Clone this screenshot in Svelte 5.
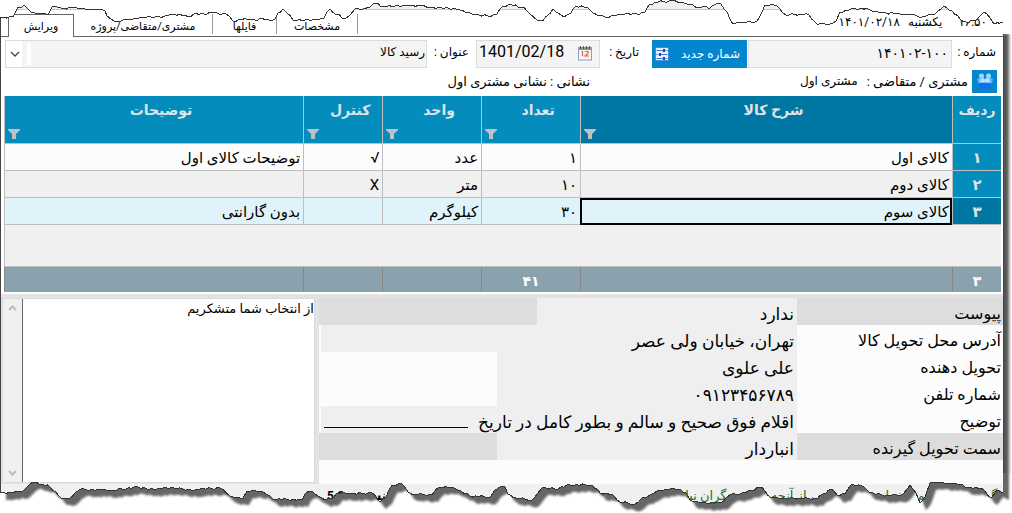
<script>
  const columns = [
    { title: 'ردیف', cls: 'c-row', total: '۳' },
    { title: 'شرح کالا', cls: 'c-name', filter: true, total: '' },
    { title: 'تعداد', cls: 'c-unit', filter: true, total: '۴۱' },
    { title: 'واحد', cls: 'c-unit', filter: true, total: '' },
    { title: 'کنترل', cls: 'c-check', filter: true, total: '' },
    { title: 'توضیحات', cls: 'c-note', filter: true, total: '' }
  ];

  const items = [
    { row: '۱', name: 'کالای اول', count: '۱', unit: 'عدد', check: '√', note: 'توضیحات کالای اول' },
    { row: '۲', name: 'کالای دوم', count: '۱۰', unit: 'متر', check: 'X', note: '' },
    { row: '۳', name: 'کالای سوم', count: '۳۰', unit: 'کیلوگرم', check: '', note: 'بدون گارانتی' }
  ];
  const selected = 2;

  const details = [
    { label: 'پیوست', value: 'ندارد', size: 'small', dark: true },
    { label: 'آدرس محل تحویل کالا', value: 'تهران، خیابان ولی عصر', size: 'full' },
    { label: 'تحویل دهنده', value: 'علی علوی', size: 'medium' },
    { label: 'شماره تلفن', value: '۰۹۱۲۳۴۵۶۷۸۹', size: 'medium' },
    { label: 'توضیح', value: 'اقلام فوق صحیح و سالم و بطور کامل در تاریخ', size: 'full', blank: true },
    { label: 'سمت تحویل گیرنده', value: 'انباردار', size: 'medium', dark: true }
  ];

  const topEdge = [
    0,17, 13,17, 16,11, 18,7, 21,8, 24,5, 28,9, 31,12, 43,14, 48,15, 52,7, 55,6, 61,8, 72,8, 80,8, 90,10, 97,9, 101,9, 105,11,
    107,16, 111,19, 115,22, 121,21, 128,19, 137,19, 147,17, 155,17, 165,16, 171,14, 185,15, 188,17, 195,13, 200,14, 212,13,
    226,14, 233,21, 241,20, 251,19, 257,21, 262,18, 271,21, 275,19, 278,13, 283,9, 287,13, 293,20, 305,20, 320,19, 324,18,
    327,12, 330,9, 335,14, 339,14, 344,19, 350,15, 355,9, 363,9, 370,7, 374,3, 378,3, 380,6, 395,6, 410,5, 421,6, 430,8,
    445,8, 460,10, 467,13, 475,15, 488,16, 497,14, 503,6, 510,4, 518,7, 524,7, 530,14, 537,20, 543,21, 548,15, 553,9, 558,13,
    564,17, 571,13, 576,6, 587,7, 593,13, 598,16, 605,17, 615,16, 625,14, 637,14, 645,12, 650,4, 658,2, 672,1, 681,3, 690,4,
    698,7, 707,7, 709,9, 714,5, 721,4, 727,12, 730,19, 733,24, 739,22, 745,23, 757,21, 762,12, 765,5, 774,5, 780,9, 786,15,
    800,14, 809,15, 814,21, 818,25, 823,23, 830,24, 836,21, 840,12, 846,10, 861,8, 870,10, 880,13, 897,13, 903,15, 912,14,
    922,17, 935,14, 944,6, 952,11, 960,19, 966,22, 974,21, 980,16, 984,12, 990,18, 994,24, 1003,22
  ];

  const bottomEdge = [
    0,493, 10,492, 20,492, 26,488, 30,484, 36,482, 42,484, 50,487, 56,492, 61,498, 70,498, 76,492, 81,489, 90,490, 98,489,
    110,491, 122,489, 138,487, 150,489, 170,488, 195,490, 200,489, 220,488, 230,496, 235,498, 243,498, 247,491, 262,491,
    266,494, 273,499, 302,500, 305,494, 310,491, 318,496, 325,500, 331,499, 337,493, 350,494, 372,493, 380,502, 386,497,
    392,485, 402,484, 408,492, 415,494, 432,495, 439,487, 452,487, 458,490, 470,496, 490,497, 495,490, 500,487, 505,487,
    508,494, 516,498, 532,500, 537,494, 542,488, 555,489, 570,485, 592,485, 600,493, 612,494, 620,502, 628,503, 635,504,
    642,498, 650,495, 657,491, 666,489, 678,489, 686,493, 690,500, 700,503, 720,503, 730,495, 745,493, 760,487, 765,491,
    770,497, 782,499, 800,498, 817,499, 823,494, 831,489, 837,495, 845,494, 852,484, 862,486, 870,493, 890,496, 903,494,
    910,485, 916,493, 920,503, 925,497, 930,483, 940,482, 952,484, 960,484, 968,488, 976,487, 985,491, 991,498, 997,490, 1003,493
  ];

  // splits a line into short steps and shakes them, so it looks like torn paper
  function tear(pts, dy = 0) {
    const out = [];
    let n = 0;
    for (let i = 0; i < pts.length - 2; i += 2) {
      const [x1, y1, x2, y2] = pts.slice(i, i + 4);
      const steps = Math.max(1, Math.round((x2 - x1) / 3));
      for (let s = 0; s < steps; s++) {
        const shake = s === 0 ? 0 : ((n * 7) % 5 - 2) / 2;
        out.push(`${x1 + ((x2 - x1) * s) / steps},${y1 + ((y2 - y1) * s) / steps + shake + dy}`);
        n++;
      }
    }
    out.push(`${pts[pts.length - 2]},${pts[pts.length - 1] + dy}`);
    return out.join(' L');
  }

  const topLine = tear(topEdge);
  const bottomLine = tear(bottomEdge, -473);

  let docNumber = '۱۴۰۱۰۲-۱۰۰';
  let docDate = '1401/02/18';
  let message = 'از انتخاب شما متشکریم';
</script>

<div class="page" dir="rtl">
  <div class="window">
    <div class="titlebar"></div>

    <header class="topbar">
      <div class="clock">
        <span class="time">۱۶:۵۰</span>
        <span>یکشنبه</span>
        <span>۱۴۰۱/۰۲/۱۸</span>
      </div>
      <nav class="tabs" dir="ltr">
        <button class="tab active">ویرایش</button>
        <button class="tab wide">مشتری/متقاضی/پروژه</button>
        <button class="tab narrow">فایلها</button>
        <button class="tab">مشخصات</button>
      </nav>
    </header>

    <div class="fields">
      <label class="number-label" for="number">شماره :</label>
      <input id="number" class="box number" bind:value={docNumber} />
      <button class="new-number">
        <span>شماره جدید</span>
        <svg width="14" height="14" viewBox="0 0 14 14">
          <rect width="14" height="14" fill="#3f8fe0" />
          <rect x="1" y="1" width="12" height="12" fill="#e6eefc" />
          <path d="M1 3.5h12M1 7.5h12M1 11.5h12" stroke="#7aa0dc" />
          <path d="M2 3.5h6M5 7.5h7M2 11.5h6" stroke="#4a7fd0" />
          <path d="M8 2h2v3h-2zM4 6h2v3h-2zM8 10h2v3h-2z" fill="#1749ab" />
        </svg>
      </button>
      <label class="date-label" for="date">تاریخ :</label>
      <div class="box date">
        <svg width="14" height="15" viewBox="0 0 14 15">
          <rect x="0.5" y="1.5" width="13" height="12.5" fill="#f4f4fa" stroke="#8f9cc4" />
          <path d="M1 1h12v3h-12z" fill="#9a8f8a" />
          <path d="M2.5 0v3M5.5 0v3M8.5 0v3M11.5 0v3" stroke="#555" />
          <path d="M3.500 5.500h1v4.500M7 5.500h3v2l-3 2.500h4" fill="none" stroke="#e8672c" stroke-width="1.2" />
        </svg>
        <input id="date" dir="ltr" bind:value={docDate} />
      </div>
      <label class="title-label" for="title">عنوان :</label>
      <div class="box title">
        <select id="title"><option>رسید کالا</option></select>
        <span class="grip"></span>
        <svg class="arrow" width="16" height="26" viewBox="0 0 16 26">
          <path d="M5 11l4 4 4-4" fill="none" stroke="#444" stroke-width="1.3" />
        </svg>
      </div>
    </div>

    <div class="customer">
      <button class="people" aria-label="مشتری">
        <svg width="16" height="16" viewBox="0 0 16 16">
          <circle cx="4.500" cy="3" r="2.500" fill="#9fd6ff" />
          <circle cx="11.500" cy="3" r="2.500" fill="#9fd6ff" />
          <path d="M0 6q4-3 8 0q4-3 8 0l-1 4q-7 3-14 0z" fill="#58b4fa" />
          <circle cx="5.500" cy="7.500" r="2.500" fill="#b5e0ff" />
          <circle cx="10.500" cy="7.500" r="2.500" fill="#b5e0ff" />
          <path d="M2 12q0-3 6-2q6-1 6 2q-1 4-6 4t-6-4z" fill="#0f6ff0" />
        </svg>
      </button>
      <span class="who">مشتری / متقاضی :</span>
      <span class="who-name">مشتری اول</span>
      <span class="address">نشانی : نشانی مشتری اول</span>
    </div>

    <table class="grid">
      <thead>
        <tr>
          {#each columns as col}
            <th class={col.cls}>
              {col.title}
              {#if col.filter}
                <svg class="funnel" width="12" height="10" viewBox="0 0 12 10">
                  <path d="M0 0h12v1l-4 4v5h-4v-5l-4-4z" fill="#c0c0c0" />
                </svg>
              {/if}
            </th>
          {/each}
        </tr>
      </thead>
      <tbody>
        {#each items as item, i}
          <tr class:selected={i === selected}>
            <th>{item.row}</th>
            <td class:focused={i === selected}>{item.name}</td>
            <td>{item.count}</td>
            <td>{item.unit}</td>
            <td>{item.check}</td>
            <td>{item.note}</td>
          </tr>
        {/each}
        <tr class="empty"><td colspan="6"></td></tr>
      </tbody>
      <tfoot>
        <tr>
          {#each columns as col}
            <td>{col.total}</td>
          {/each}
        </tr>
      </tfoot>
    </table>

    <div class="lower">
      <dl class="details">
        {#each details as d}
          <div class="detail" class:dark={d.dark}>
            <dt>{d.label}</dt>
            <dd class={d.size}>
              {d.value}
              {#if d.blank}<span class="blank"></span>{/if}
            </dd>
          </div>
        {/each}
      </dl>
      <div class="memo">
        <textarea aria-label="پیام" bind:value={message}></textarea>
        <div class="scroll">
          <svg width="9" height="6" viewBox="0 0 9 6"><path d="M1 5l3.500-3.500 3.500 3.500" fill="none" stroke="#bbb" stroke-width="2" /></svg>
          <svg width="9" height="6" viewBox="0 0 9 6"><path d="M1 1l3.500 3.500 3.500-3.500" fill="none" stroke="#bbb" stroke-width="2" /></svg>
        </div>
      </div>
    </div>

    <footer class="status">
      <span class="quote">اگر به آنچه که می خواستی نرسیدی، از آنچه هستی نگران نباش</span>
      <span class="version">نسخه : 5.2</span>
    </footer>
  </div>

  <svg class="edge top" viewBox="0 0 1012 34" preserveAspectRatio="none">
    <path d="M0,0 L{topLine} L1003,34 L1012,34 L1012,0 Z" fill="#fff" />
    <path d="M{topLine}" fill="none" stroke="#333" shape-rendering="crispEdges" />
  </svg>

  <svg class="edge bottom" viewBox="0 0 1012 40" preserveAspectRatio="none">
    <defs>
      <clipPath id="outside"><path d="M{bottomLine} L1003,0 L1012,0 L1012,40 L0,40 Z" /></clipPath>
      <filter id="soft"><feGaussianBlur stdDeviation="1.2" /></filter>
    </defs>
    <g clip-path="url(#outside)">
      <rect width="1012" height="40" fill="#fff" />
      <path d="M{bottomLine} L1003,-30 L0,-30 Z" transform="translate(6 7)" fill="#666" filter="url(#soft)" />
    </g>
    <path d="M{bottomLine}" fill="none" stroke="#333" shape-rendering="crispEdges" />
  </svg>
</div>

<style>
  :global(body) {
    background: #fff;
    overflow: hidden;
  }

  .page {
    position: relative;
    padding-bottom: 5px;
    font-family: Roboto, "DejaVu Sans", sans-serif;
    font-size: 12px;
    color: #000;
    overflow: hidden;
  }

  .page * {
    box-sizing: border-box;
  }

  button, input, select, textarea {
    font: inherit;
    color: inherit;
    border: 0;
    margin: 0;
    padding: 0;
    background: none;
    outline: none;
    border-radius: 0;
  }

  svg {
    display: block;
    flex: none;
  }

  .window {
    margin-right: 8px;
    border-left: 1px solid #444;
    border-right: 1px solid #444;
    box-shadow: 5px 33px 3px #555;
    background: #fff;
  }

  .titlebar {
    height: 10px;
    background: #f0f0f0;
    border-bottom: 1px solid #c8c8c8;
  }

  .topbar {
    display: flex;
    justify-content: space-between;
    height: 27px;
    padding: 4px 16px 0 7px;
    border-bottom: 1px solid #666;
  }

  .clock {
    display: flex;
    gap: 8px;
    line-height: 16px;
  }

  .time {
    margin-left: 8px;
  }

  .tabs {
    display: flex;
    font-size: 11px;
  }

  .tab {
    width: 81px;
    height: 20px;
    padding-top: 4px;
    border-right: 1px solid #999;
  }

  .tab.wide {
    width: 139px;
  }

  .tab.narrow {
    width: 64px;
  }

  .tab.active {
    width: 66px;
    height: 23px;
    padding-top: 1px;
    border: 1px solid #666;
    border-bottom: 0;
    background: #fff;
  }

  .fields {
    display: flex;
    align-items: center;
    height: 33px;
    padding: 0 7px 0 4px;
  }

  .box {
    height: 28px;
    border: 1px solid #dcdcdc;
    background: #f4f4f4;
  }

  .fields label {
    line-height: 16px;
    padding-bottom: 4px;
  }

  .number-label {
    width: 44px;
  }

  .number {
    width: 204px;
    padding: 0 3px 2px;
    font-size: 14px;
  }

  .new-number {
    display: flex;
    align-items: center;
    justify-content: space-between;
    width: 95px;
    height: 28px;
    margin-right: 1px;
    padding: 0 7px 0 3px;
    background: #0486cf;
    color: #fff;
  }

  .date-label {
    width: 52px;
    padding-right: 13px;
  }

  .date {
    display: flex;
    align-items: center;
    width: 124px;
    padding: 0 7px 0 2px;
  }

  .date input {
    flex: 1;
    min-width: 0;
    padding: 0 0 4px;
    font-size: 16px;
  }

  .title-label {
    width: 49px;
    padding-right: 7px;
  }

  .title {
    display: flex;
    flex: 1;
  }

  .title select {
    flex: 1;
    appearance: none;
    padding: 0 1px 3px;
  }

  .grip {
    width: 9px;
    border: solid #f4f4f4;
    border-width: 2px 0 2px 5px;
    background: #fff;
  }

  .arrow {
    background: #fff;
  }

  .customer {
    display: flex;
    align-items: center;
    height: 26px;
    padding-right: 6px;
    padding-bottom: 4px;
  }

  .people {
    display: grid;
    place-items: center;
    width: 25px;
    height: 23px;
    background: #0486cf;
  }

  .who {
    margin-right: 4px;
    font-size: 13px;
  }

  .who-name {
    margin-right: 9px;
  }

  .address {
    margin-right: 210px;
    font-size: 13px;
  }

  .grid {
    width: calc(100% - 5px);
    margin: 0 2px 0 3px;
    table-layout: fixed;
    border-collapse: separate;
    border-spacing: 0;
    font-size: 15px;
    background: #f0f0f0;
  }

  .grid th, .grid td {
    padding: 2px 3px 0;
    border-left: 1px solid #bfbfbf;
    border-bottom: 1px solid #bfbfbf;
    text-align: right;
  }

  .grid thead th {
    position: relative;
    height: 48px;
    padding: 6px 0 0 14px;
    vertical-align: top;
    text-align: center;
    color: #dfe3e6;
    background: #038cbc;
    font-size: 14px;
  }

  .grid thead .c-name {
    background: #0077a3;
  }

  .grid thead .c-row {
    width: 49px;
    padding-left: 0;
  }

  .c-unit {
    width: 99px;
  }

  .c-check {
    width: 79px;
  }

  .c-note {
    width: 30%;
  }

  .funnel {
    position: absolute;
    left: 3px;
    bottom: 4px;
  }

  .grid tbody td, .grid tbody th {
    height: 27px;
    background: #fcfcfc;
  }

  .grid tbody tr:nth-child(2) td {
    background: #f0f0f0;
  }

  .grid tbody th {
    text-align: center;
    color: #dfe3e6;
    background: #038cbc;
  }

  .grid .selected th {
    background: #0077a3;
  }

  .grid tbody .selected td {
    background: #e1f3fa;
  }

  .grid .focused {
    outline: 2px solid #000;
    outline-offset: -2px;
  }

  .grid tbody .empty td {
    height: 42px;
    background: #f0f0f0;
  }

  .grid tfoot td {
    height: 25px;
    padding-top: 3px;
    border-bottom: 0;
    border-left-color: #888;
    background: #8aa2ae;
    color: #fff;
    font-size: 14px;
    font-weight: bold;
    text-align: center;
  }

  .lower {
    display: flex;
    margin-top: 2px;
    padding-top: 4px;
    background: #e3e3e3;
  }

  .details {
    flex: 1;
    margin: 0;
    padding-bottom: 24px;
    background: #fcfcfc;
    font-size: 16px;
  }

  .detail {
    display: flex;
    height: 27px;
    line-height: 32px;
  }

  .detail.dark {
    background: #ddd;
  }

  dt {
    width: 206px;
    padding-right: 2px;
  }

  dd {
    display: flex;
    margin: 0;
    padding-right: 3px;
    background: #efefef;
    font-size: 17px;
    white-space: nowrap;
  }

  .small {
    width: 260px;
  }

  .medium {
    width: 300px;
  }

  .full {
    flex: 1;
    margin-left: 2px;
  }

  .blank {
    flex: 1;
    height: 22px;
    margin: 0 10px 0 3px;
    border-bottom: 1px solid #000;
  }

  .memo {
    display: flex;
    width: 313px;
    margin: 0 4px 1px 1px;
    border: 1px solid #dadada;
    background: #fff;
  }

  .memo textarea {
    flex: 1;
    min-width: 0;
    padding: 2px 0;
    resize: none;
    font-size: 13px;
    background: #fff;
    border-left: 1px solid #666;
    overflow: hidden;
  }

  .scroll {
    display: flex;
    flex-direction: column;
    justify-content: space-between;
    align-items: center;
    width: 19px;
    padding: 6px 0;
    background: #f0f0f0;
  }

  .status {
    display: flex;
    justify-content: space-between;
    height: 24px;
    padding: 0 2px 0 326px;
    line-height: 24px;
    background: #f0f0f0;
  }

  .quote {
    color: #2c6b2f;
    font-size: 13px;
  }

  .version {
    font-weight: bold;
  }

  /* torn paper edges lie over the window */
  .edge {
    position: absolute;
    left: 0;
    width: 100%;
    pointer-events: none;
  }

  .top {
    top: 0;
    height: 34px;
  }

  .bottom {
    bottom: 0;
    height: 40px;
  }
</style>
